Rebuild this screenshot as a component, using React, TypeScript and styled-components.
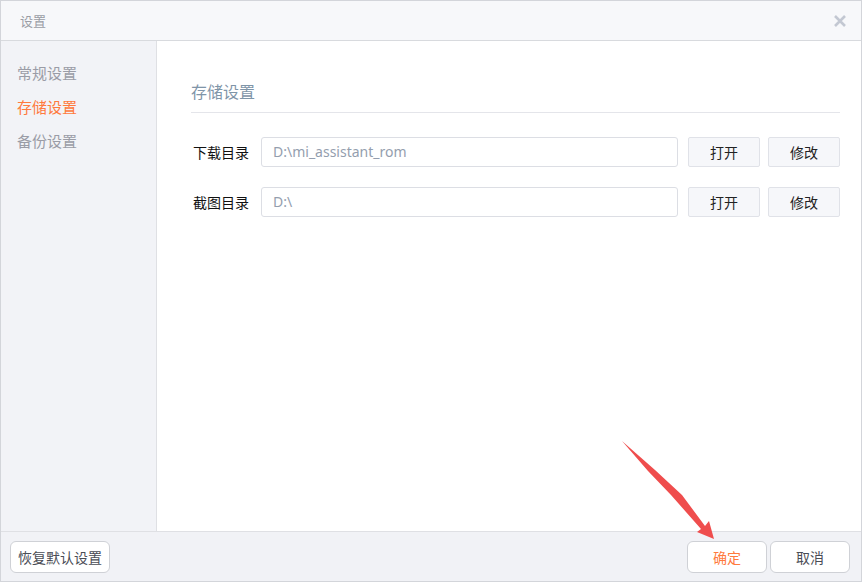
import React from 'react';
import styled, { createGlobalStyle } from 'styled-components';

const GlobalStyle = createGlobalStyle`
  html, body {
    margin: 0;
    padding: 0;
    background: #fff;
  }
  * {
    box-sizing: border-box;
  }
`;

const Window = styled.div`
  position: relative;
  width: 862px;
  height: 582px;
  display: flex;
  flex-direction: column;
  border: 1px solid #d3d5da;
  background: #fff;
  font-family: "Noto Sans", "Noto Sans CJK SC", sans-serif;
  font-size: 14px;
  overflow: hidden;
`;

const TitleBar = styled.div`
  height: 40px;
  flex: none;
  display: flex;
  align-items: center;
  justify-content: space-between;
  padding: 0 15px 0 19px;
  background: #f7f8fa;
  border-bottom: 1px solid #d8dade;
`;

const Title = styled.span`
  font-size: 13px;
  color: #9a9da5;
`;

const CloseIcon = styled.svg`
  width: 12px;
  height: 12px;
  display: block;
`;

const Body = styled.div`
  flex: 1;
  display: flex;
  min-height: 0;
`;

const Sidebar = styled.nav`
  width: 156px;
  flex: none;
  display: flex;
  flex-direction: column;
  padding: 15px 0 0 16px;
  background: #f2f3f7;
  border-right: 1px solid #dfe0e4;
`;

const NavItem = styled.div<{ $active?: boolean }>`
  height: 34px;
  line-height: 34px;
  font-size: 15px;
  color: ${(p) => (p.$active ? '#ff7a3d' : '#9a9ca6')};
`;

const Main = styled.main`
  flex: 1;
  display: flex;
  flex-direction: column;
  padding: 36px 21px 0 34px;
`;

const SectionTitle = styled.h2`
  margin: 0 0 24px;
  height: 36px;
  line-height: 30px;
  font-size: 16px;
  font-weight: normal;
  color: #7f95a8;
  border-bottom: 1px solid #e4e5ea;
`;

const Rows = styled.div`
  display: flex;
  flex-direction: column;
  gap: 20px;
`;

const Row = styled.div`
  display: flex;
  align-items: center;
  height: 30px;
  padding-left: 2px;
`;

const RowLabel = styled.label`
  width: 68px;
  flex: none;
  font-size: 14px;
  color: #111;
`;

const PathInput = styled.div`
  width: 417px;
  height: 30px;
  line-height: 28px;
  padding-left: 11px;
  border: 1px solid #dcdee4;
  border-radius: 3px;
  font-size: 14px;
  color: #949eae;
  margin-right: 10px;
`;

const SmallButton = styled.button`
  width: 72px;
  height: 30px;
  margin-right: 8px;
  padding: 0;
  border: 1px solid #e0e2e8;
  border-radius: 2px;
  background: #f6f7fa;
  font: inherit;
  font-size: 14px;
  color: #222;

  &:last-child {
    margin-right: 0;
  }
`;

const Footer = styled.footer`
  height: 50px;
  flex: none;
  display: flex;
  align-items: center;
  justify-content: space-between;
  padding: 0 11px 0 9px;
  background: #f1f2f6;
  border-top: 1px solid #dfe0e4;
`;

const FooterGroup = styled.div`
  display: flex;
  gap: 3px;
`;

const FooterButton = styled.button<{ $primary?: boolean; $width: number }>`
  width: ${(p) => p.$width}px;
  height: 32px;
  padding: 0;
  border: 1px solid #cfd1d6;
  border-radius: 6px;
  background: #fff;
  font: inherit;
  font-size: 14px;
  color: ${(p) => (p.$primary ? '#ff7a3d' : '#4a4d55')};
`;

const Arrow = styled.svg`
  position: absolute;
  left: -1px;
  top: -1px;
  width: 862px;
  height: 582px;
  pointer-events: none;
`;

const App = () => (
  <>
    <GlobalStyle />
    <Window>
      <TitleBar>
        <Title>设置</Title>
        <CloseIcon viewBox="0 0 12 12">
          <path d="M1 1l10 10M11 1L1 11" stroke="#c3c8d2" strokeWidth="2.6" fill="none" />
        </CloseIcon>
      </TitleBar>
      <Body>
        <Sidebar>
          <NavItem>常规设置</NavItem>
          <NavItem $active>存储设置</NavItem>
          <NavItem>备份设置</NavItem>
        </Sidebar>
        <Main>
          <SectionTitle>存储设置</SectionTitle>
          <Rows>
            <Row>
              <RowLabel>下载目录</RowLabel>
              <PathInput>D:\mi_assistant_rom</PathInput>
              <SmallButton>打开</SmallButton>
              <SmallButton>修改</SmallButton>
            </Row>
            <Row>
              <RowLabel>截图目录</RowLabel>
              <PathInput>D:\</PathInput>
              <SmallButton>打开</SmallButton>
              <SmallButton>修改</SmallButton>
            </Row>
          </Rows>
        </Main>
      </Body>
      <Footer>
        <FooterButton $width={100}>恢复默认设置</FooterButton>
        <FooterGroup>
          <FooterButton $primary $width={80}>确定</FooterButton>
          <FooterButton $width={80}>取消</FooterButton>
        </FooterGroup>
      </Footer>
      <Arrow viewBox="0 0 862 582">
        <polygon points="622,441 655,470 682,495 705,526 709,521 714,539 697,532 701,529 671,495 648,471" fill="#ef4d4d" />
      </Arrow>
    </Window>
  </>
);

export default App;
